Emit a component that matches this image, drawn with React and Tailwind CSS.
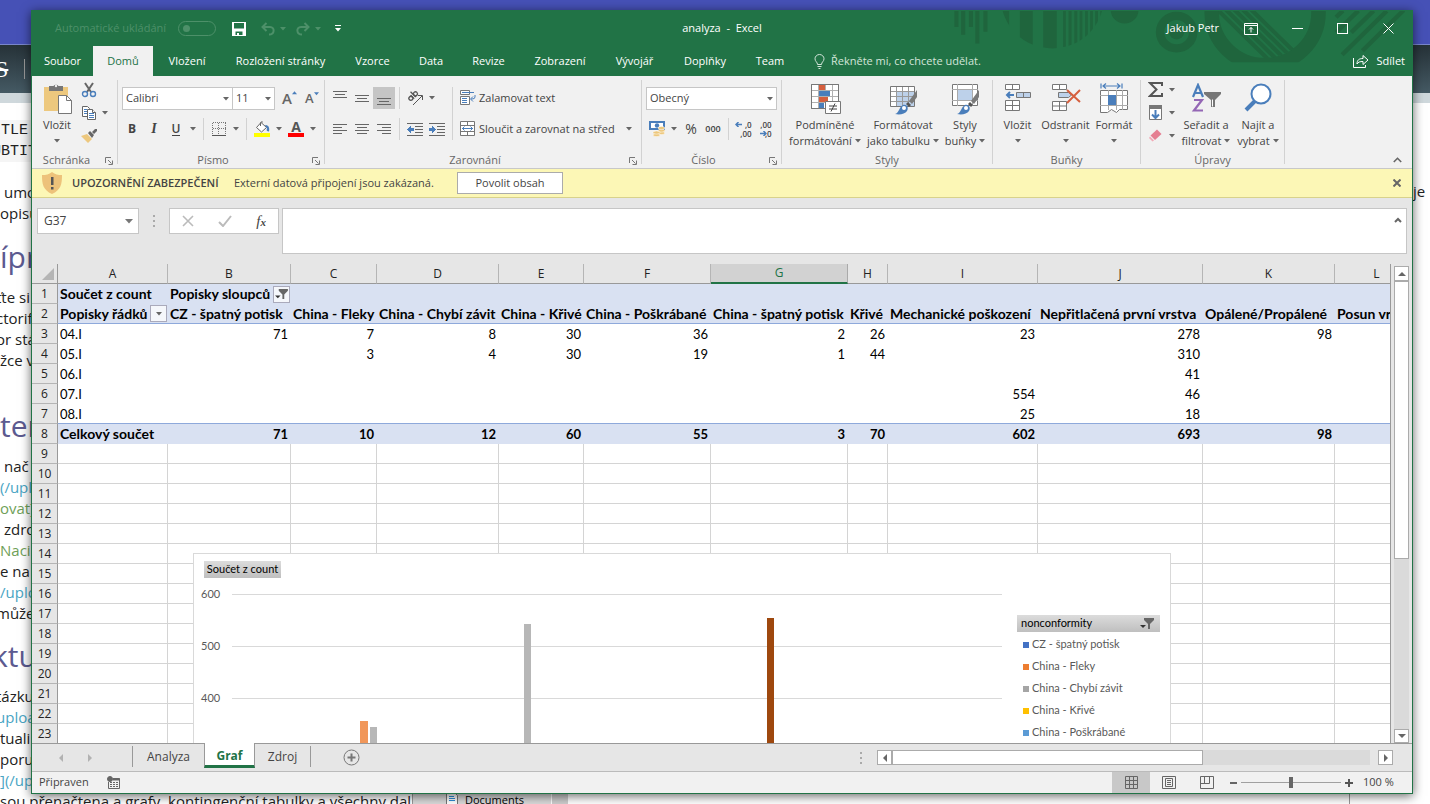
import { useState } from 'react';

const MENU = [
  { name: 'Soubor', width: 'w-[61px]' },
  { name: 'Domů', width: 'w-[60px]' },
  { name: 'Vložení', width: 'w-[68px]' },
  { name: 'Rozložení stránky', width: 'w-[119px]' },
  { name: 'Vzorce', width: 'w-[65px]' },
  { name: 'Data', width: 'w-[52px]' },
  { name: 'Revize', width: 'w-[63px]' },
  { name: 'Zobrazení', width: 'w-[80px]' },
  { name: 'Vývojář', width: 'w-[69px]' },
  { name: 'Doplňky', width: 'w-[72px]' },
  { name: 'Team', width: 'w-[58px]' },
];

const COLUMNS = [
  { id: 'A', width: 110 },
  { id: 'B', width: 123 },
  { id: 'C', width: 86 },
  { id: 'D', width: 122 },
  { id: 'E', width: 85 },
  { id: 'F', width: 127 },
  { id: 'G', width: 137 },
  { id: 'H', width: 40 },
  { id: 'I', width: 150 },
  { id: 'J', width: 165 },
  { id: 'K', width: 132 },
  { id: 'L', width: 84 },
];

const ROW_HEADER_WIDTH = 26;
const SHEET_WIDTH = COLUMNS.reduce((sum, col) => sum + col.width, ROW_HEADER_WIDTH);

const TITLES = [
  'Popisky řádků', 'CZ - špatný potisk', 'China - Fleky', 'China - Chybí závit', 'China - Křivé',
  'China - Poškrábané', 'China - špatný potisk', 'Křivé', 'Mechanické poškození',
  'Nepřitlačená první vrstva', 'Opálené/Propálené', 'Posun vrstev',
];

const DATA = [
  ['04.I', 71, 7, 8, 30, 36, 2, 26, 23, 278, 98, ''],
  ['05.I', '', 3, 4, 30, 19, 1, 44, '', 310, '', ''],
  ['06.I', '', '', '', '', '', '', '', '', 41, '', ''],
  ['07.I', '', '', '', '', '', '', '', 554, 46, '', ''],
  ['08.I', '', '', '', '', '', '', '', 25, 18, '', ''],
];

const TOTALS = ['Celkový součet', 71, 10, 12, 60, 55, 3, 70, 602, 693, 98, ''];

const EMPTY_ROWS = [9, 10, 11, 12, 13, 14, 15, 16, 17, 18, 19, 20, 21, 22, 23];

const LEGEND = [
  { name: 'CZ - špatný potisk', color: 'bg-[#4472c4]' },
  { name: 'China - Fleky', color: 'bg-[#ed7d31]' },
  { name: 'China - Chybí závit', color: 'bg-[#a5a5a5]' },
  { name: 'China - Křivé', color: 'bg-[#ffc000]' },
  { name: 'China - Poškrábané', color: 'bg-[#5b9bd5]' },
];

/* ---------- small shared pieces ---------- */

function Caret({ className = 'text-[#666]' }) {
  return (
    <svg viewBox="0 0 6 4" className={`h-1 w-1.5 shrink-0 ${className}`}>
      <path d="M0 0h6L3 3.5z" fill="currentColor" />
    </svg>
  );
}

function Tool({ label, active, children }) {
  return (
    <button
      aria-label={label}
      className={`flex h-[22px] w-[22px] shrink-0 items-center justify-center ${active ? 'bg-[#c5c5c5]' : ''}`}
    >
      {children}
    </button>
  );
}

function CaretButton({ label }) {
  return (
    <button aria-label={label} className="flex h-[22px] w-3 shrink-0 items-center justify-center">
      <Caret />
    </button>
  );
}

function Divider() {
  return <div className="mx-1 h-[22px] w-px shrink-0 bg-[#d2d2d2]" />;
}

function Group({ name, width, launcher = true, children }) {
  return (
    <section className={`flex shrink-0 flex-col ${width}`}>
      <div className="flex-1">{children}</div>
      <div className="mb-px flex h-[14px] items-center px-1 leading-[14px] text-[#666]">
        <span className={`flex-1 text-center ${launcher ? 'pr-2' : ''}`}>{name}</span>
        {launcher ? (
          <button aria-label={`${name} – další`} className="mt-[2px]">
            <svg viewBox="0 0 8 8" className="h-2 w-2" fill="none" stroke="#777">
              <path d="M.5 6V.5H6M3 3l3.5 3.5M7.5 3.5v4h-4" />
            </svg>
          </button>
        ) : null}
      </div>
    </section>
  );
}

function GroupLine() {
  return <div className="mt-1 mb-1 w-px shrink-0 bg-[#d2d2d2]" />;
}

function BigButton({ width, icon, lines, caretBelow }) {
  return (
    <button className={`flex flex-col items-center pt-[7px] leading-4 ${width}`}>
      <span className="mb-[2px] flex h-8 w-8 items-center justify-center">{icon}</span>
      <span>{lines[0]}</span>
      {caretBelow ? (
        <span className="flex h-4 items-center">
          <Caret />
        </span>
      ) : (
        <span className="flex items-center gap-[3px] whitespace-nowrap">
          {lines[1]} <Caret />
        </span>
      )}
    </button>
  );
}

function DropDown({ label, value, width }) {
  return (
    <div className={`relative ${width}`}>
      <select
        aria-label={label}
        defaultValue={value}
        className="h-[23px] w-full appearance-none rounded-none border border-[#c6c6c6] bg-white pl-[3px] text-[11px] text-[#444] outline-none"
      >
        <option>{value}</option>
      </select>
      <Caret className="pointer-events-none absolute top-[10px] right-1 text-[#666]" />
    </div>
  );
}

/* ---------- icons ---------- */

function Lines({ rows }) {
  return (
    <svg viewBox="0 0 14 14" className="h-[14px] w-[14px]" shapeRendering="crispEdges">
      {rows.map(([x, y, w]) => (
        <rect key={y} x={x} y={y} width={w} height="1" fill="#666" />
      ))}
    </svg>
  );
}

const alignTop = [[0, 0, 14], [2, 3, 10], [0, 6, 14]];
const alignMiddle = [[0, 4, 14], [2, 7, 10], [0, 10, 14]];
const alignBottom = [[0, 7, 14], [2, 10, 10], [0, 13, 14]];
const alignLeft = [[0, 2, 14], [0, 5, 9], [0, 8, 14], [0, 11, 9]];
const alignCenter = [[0, 2, 14], [2, 5, 10], [0, 8, 14], [2, 11, 10]];
const alignRight = [[0, 2, 14], [5, 5, 9], [0, 8, 14], [5, 11, 9]];

function PasteIcon() {
  return (
    <svg viewBox="0 0 30 32" className="h-8 w-[30px]">
      <path d="M2 4h24v24H2z" fill="#edc87e" />
      <path d="M7 8V3h4.500a3 3 0 0 1 5 0H21v5z" fill="#777" />
      <circle cx="14" cy="3" r="1.200" fill="#f0f0f0" />
      <path d="M16.500 12.500h8l5 5v13h-13z" fill="#fff" stroke="#777" />
      <path d="M24.500 12.500v5h5" fill="none" stroke="#777" />
    </svg>
  );
}

function CutIcon() {
  return (
    <svg viewBox="0 0 16 16" className="h-4 w-4" fill="none">
      <path d="M4 1l6 9M12 1L6 10" stroke="#666" strokeWidth="2" />
      <circle cx="4" cy="12" r="2.500" stroke="#4a7ebb" strokeWidth="1.400" />
      <circle cx="12" cy="12" r="2.500" stroke="#4a7ebb" strokeWidth="1.400" />
    </svg>
  );
}

function CopyIcon() {
  return (
    <svg viewBox="0 0 16 16" className="h-4 w-4" fill="#fff" stroke="#666">
      <path d="M1.500 1.500h5l2 2v8h-7z" />
      <path d="M3 4.500h3M3 6.500h3M3 8.500h3" stroke="#4a7ebb" />
      <path d="M6.500 4.500h5l3 3v7h-8z" />
      <path d="M11.500 4.500v3h3" />
      <path d="M8 8.500h5M8 10.500h5M8 12.500h5" stroke="#4a7ebb" />
    </svg>
  );
}

function PainterIcon() {
  return (
    <svg viewBox="0 0 16 16" className="h-4 w-4">
      <path d="M0 8l6-2 5 5-4 4z" fill="#edc87e" />
      <path d="M7 5l2-2 4 4-2 3zM11 4l3-3h2v2l-3 3z" fill="#666" />
    </svg>
  );
}

function FillIcon() {
  return (
    <svg viewBox="0 0 16 16" className="h-4 w-4">
      <path d="M7 1.500l5.500 5-5 4.500L2.500 6.500z" fill="#fff" stroke="#666" />
      <path d="M6.500 5V1.500A1.500 1.500 0 0 1 9 1.500" fill="none" stroke="#666" />
      <path d="M11 4c3 0 5 2 4 6.500-2 0-3-1-2-3z" fill="#4a7ebb" />
      <path d="M0 12h16v4H0z" fill="#ff0" />
    </svg>
  );
}

function BordersIcon() {
  return (
    <svg viewBox="0 0 14 14" className="h-[14px] w-[14px]" shapeRendering="crispEdges" fill="none" stroke="#777">
      <path d="M.5.5h13M.5 6.500h13M.5.5v13M6.500.5v13M13.500.5v13" strokeDasharray="1 1" />
      <path d="M0 13.500h14" stroke="#555" />
    </svg>
  );
}

function OrientationIcon() {
  return (
    <svg viewBox="0 0 16 16" className="h-4 w-4" fill="none" stroke="#555">
      <g transform="rotate(-45 6 7)" strokeWidth="1.300">
        <circle cx="3.500" cy="6.500" r="2" />
        <path d="M5.700 4v5M8 1.500V9" />
        <circle cx="10" cy="6.500" r="2" />
      </g>
      <path d="M6 15l9-9M11 5.500h4.500V10" />
    </svg>
  );
}

function IndentIcon({ right }) {
  return (
    <svg viewBox="0 0 16 14" className="h-[14px] w-4" shapeRendering="crispEdges">
      <path d="M0 1h16v1H0zM8 4h8v1H8zM8 7h8v1H8zM8 10h8v1H8zM0 13h16v1H0z" fill="#666" />
      <path d={right ? 'M0 6h3V4l4 3.500-4 3.500V9H0z' : 'M7 6H4V4L0 7.500 4 11V9h3z'} fill="#4a7ebb" />
    </svg>
  );
}

function WrapIcon() {
  return (
    <svg viewBox="0 0 16 16" className="h-4 w-4" fill="none" stroke="#777">
      <path d="M.5.5h9v4h-9zM.5 6.500h9v8h-9z" fill="#fff" />
      <path d="M2 2.500h12M2 8.500h5M2 10.500h5M2 12.500h5M15 5v2q0 2-3 2h-1M13 6.500L10.500 9l2.500 2.500" stroke="#4a7ebb" />
    </svg>
  );
}

function MergeIcon() {
  return (
    <svg viewBox="0 0 16 16" className="h-4 w-4" fill="#fff" stroke="#777">
      <path d="M.5.5h14v14H.5zM.5 4.500h14M.5 10.500h14M7.500.5v4M7.500 10.500v4" />
      <path d="M2 7.500h11M4.500 5.500l-2 2 2 2M10.500 5.500l2 2-2 2" fill="none" stroke="#4a7ebb" />
    </svg>
  );
}

function CurrencyIcon() {
  return (
    <svg viewBox="0 0 16 16" className="h-4 w-4">
      <path d="M0 0h16v9H0z" fill="#4a7ebb" />
      <path d="M2 2h12v5H2z" fill="#fff" />
      <circle cx="8" cy="4.500" r="2.200" fill="#4a7ebb" />
      <g fill="#edc87e" stroke="#fff" strokeWidth=".5">
        <ellipse cx="12.500" cy="12" rx="3.300" ry="1.600" />
        <ellipse cx="12.500" cy="9.500" rx="3.300" ry="1.600" />
        <ellipse cx="12.500" cy="7" rx="3.300" ry="1.600" />
        <ellipse cx="7.500" cy="14" rx="3.500" ry="1.600" />
        <ellipse cx="7.500" cy="11.500" rx="3.500" ry="1.600" />
      </g>
    </svg>
  );
}

function DecimalIcon({ more }) {
  return (
    <span className="relative flex flex-col items-end text-[8px] leading-[9px] font-semibold text-[#444]">
      <span>{more ? ',0' : ',00'}</span>
      <span className="pl-1">{more ? ',00' : ',0'}</span>
      <svg
        viewBox="0 0 7 5"
        className={`absolute h-[5px] w-[7px] ${more ? 'top-[2px] -left-px' : 'bottom-[2px] left-0'}`}
        fill="none"
        stroke="#4a7ebb"
        strokeWidth="1.500"
      >
        <path d={more ? 'M7 2.500H1M3.500 0L1 2.500 3.500 5' : 'M0 2.500h6M3.500 0L6 2.500 3.500 5'} />
      </svg>
    </span>
  );
}

function BrushShape() {
  return (
    <g>
      <path d="M30 7v7l-5 7-3-3z" fill="#7a7a7a" />
      <path d="M21 19l3 3-2 2-3-3z" fill="#555" />
      <path d="M8 31c4-1 4-7 8-9 4-1 6 3 4 6-2 3-7 4-12 3z" fill="#4a7ebb" />
      <circle cx="17" cy="25" r="2" fill="#fff" />
    </g>
  );
}

function ConditionalIcon() {
  return (
    <svg viewBox="0 0 32 32" className="h-8 w-8">
      <path d="M2.500 1.500h27v24h-27z" fill="#fff" stroke="#777" />
      <path d="M2 7.500h28M2 13.500h28M2 19.500h28M9.500 1v25M16.500 1v25M23.500 1v25" stroke="#b0b0b0" />
      <path d="M10 2h6v5h-6zM10 14h9v5h-9z" fill="#d65f3e" />
      <path d="M10 8h11v5H10zM10 20h5v6h-5z" fill="#4a7ebb" />
      <path d="M2.500 1.500h27v24h-27z" fill="none" stroke="#777" />
      <path d="M16.500 18.500h15v12h-15z" fill="#fff" stroke="#777" />
      <path d="M20 23h8M20 26h8M26 20.500l-4 8" stroke="#444" />
    </svg>
  );
}

function TableFormatIcon() {
  return (
    <svg viewBox="0 0 32 32" className="h-8 w-8">
      <path d="M3.500 3.500h24v20h-24z" fill="#fff" />
      <path d="M10 9h17v14H10z" fill="#bdd1ea" />
      <path d="M3 8.500h25M3 13.500h25M3 18.500h25M9.500 3v20M15.500 3v20M21.500 3v20" stroke="#999" />
      <path d="M3.500 3.500h24v20h-24z" fill="none" stroke="#777" />
      <BrushShape />
    </svg>
  );
}

function CellStylesIcon() {
  return (
    <svg viewBox="0 0 32 32" className="h-8 w-8">
      <path d="M3.500 1.500h25v21h-25z" fill="#fff" stroke="#777" />
      <path d="M3 6.500h26M3 17.500h26M8.500 1v22M23.500 1v22" stroke="#aaa" />
      <path d="M9 7h14v10H9z" fill="#bdd1ea" />
      <BrushShape />
    </svg>
  );
}

function InsertCellsIcon() {
  return (
    <svg viewBox="0 0 32 32" className="h-8 w-8" fill="#fff" stroke="#777">
      <path d="M3.500 1.500h14v5h-14zM10.500 1.500v5M3.500 17.500h14v10h-14zM3.500 22.500h14M10.500 17.500v10" />
      <path d="M14.500 9.500h14v5h-14zM21.500 9.500v5" fill="#bdd1ea" />
      <path d="M12 12H5M8 9l-3 3 3 3" fill="none" stroke="#4a7ebb" strokeWidth="2" />
    </svg>
  );
}

function DeleteCellsIcon() {
  return (
    <svg viewBox="0 0 32 32" className="h-8 w-8" fill="#fff" stroke="#777">
      <path d="M2.500 1.500h14v5h-14zM9.500 1.500v5M2.500 18.500h14v9h-14zM2.500 23h14M9.500 18.500v9" />
      <path d="M8.500 9.500h10l3 2.500-3 2.500h-10z" fill="#bdd1ea" />
      <path d="M17 7l13 12M30 7L17 20" fill="none" stroke="#d65f3e" strokeWidth="2" />
    </svg>
  );
}

function FormatCellsIcon() {
  return (
    <svg viewBox="0 0 32 32" className="h-8 w-8">
      <path d="M3 .5v5M24 .5v5M5 3h17M8 .5L5 3l3 2.500M19 .5L22 3l-3 2.500" fill="none" stroke="#4a7ebb" strokeWidth="1.200" />
      <path d="M2.500 7.500h27v19h-8l-3 3-5-3-4 3h-7z" fill="#fff" stroke="#777" />
      <path d="M2 12.500h28M2 22.500h28M10.500 7v20M18.500 7v20M24.500 7v20" stroke="#aaa" />
      <path d="M10 12h8v10h-8z" fill="#4a7ebb" />
    </svg>
  );
}

function SortIcon() {
  return (
    <svg viewBox="0 0 32 32" className="h-8 w-8">
      <path d="M3 14L8 2l5 12M5 10h6" fill="none" stroke="#4a7ebb" strokeWidth="2.200" />
      <path d="M4 17h8L4 27.500h9" fill="none" stroke="#9467b5" strokeWidth="2.200" />
      <path d="M14 9h17v2l-6 6v7h-4v-7l-7-6z" fill="#777" />
      <path d="M22.500 16.500v7" stroke="#fff" />
    </svg>
  );
}

function FindIcon() {
  return (
    <svg viewBox="0 0 32 32" className="h-8 w-8">
      <path d="M13 18l-9 9" stroke="#4a7ebb" strokeWidth="4" />
      <circle cx="19" cy="11" r="9.500" fill="#fff" stroke="#4a7ebb" strokeWidth="2" />
    </svg>
  );
}

function FunnelIcon({ className }) {
  return (
    <svg viewBox="0 0 14 12" className={className}>
      <path d="M4 0h10v2l-4 4v5H8V6L4 2z" fill="#666" />
      <path d="M0 7h6L3 10z" fill="#333" />
    </svg>
  );
}

/* ---------- title bar ---------- */

function TitlePattern() {
  return (
    <svg
      viewBox="150 33 1350 160"
      preserveAspectRatio="none"
      className="pointer-events-none absolute top-0 right-[5px] h-[53px] w-[456px]"
      fill="#1f653d"
    >
      <defs>
        <clipPath id="disc"><circle cx="450" cy="-6" r="152" /></clipPath>
        <clipPath id="bowl"><circle cx="1080" cy="38" r="137" /></clipPath>
        <clipPath id="bowlEdge"><path d="M850 33h500v155H850z" /></clipPath>
      </defs>
      <path d="M160 33h12v48h-12zM180 33h12v72h-12zM203 33h12v48h-12zM222 33h12v98h-12zM246 33h12v63h-12z" />
      <path
        clipPath="url(#disc)"
        d="M280 33h42v130h-42zM354 33h38v130h-38zM423 33h40v130h-40zM482 33h8v130h-8zM498 33h9v130h-9zM515 33h9v130h-9zM531 33h8v130h-8zM547 33h8v130h-8zM562 33h8v130h-8zM577 33h8v130h-8zM592 33h8v130h-8z"
      />
      <circle cx="664" cy="30" r="41" />
      <circle cx="818" cy="97" r="49" fill="none" stroke="#1f653d" strokeWidth="25" />
      <circle cx="818" cy="97" r="22" />
      <g clipPath="url(#bowlEdge)">
        <circle cx="1080" cy="38" r="158" fill="none" stroke="#1f653d" strokeWidth="43" />
      </g>
      <g clipPath="url(#bowl)" stroke="#1f653d" strokeWidth="12">
        <path d="M930 20l170 170M955 20l170 170M980 20l170 170M1005 20l170 170M1030 20l170 170" />
      </g>
      <g stroke="#1f653d" strokeWidth="13">
        <path d="M1290 52l20-20M1290 98l66-66M1335 98l66-66M1308 165l132-132M1368 153l122-122" />
      </g>
    </svg>
  );
}

function TitleBar() {
  return (
    <div className="relative flex h-[35px] items-center justify-between text-[11px] text-white">
      <div className="flex items-center pl-[23px] text-[#4d9069]">
        <label htmlFor="autosave" className="w-[123px]">Automatické ukládání</label>
        <input
          id="autosave"
          type="checkbox"
          className="flex h-[15px] w-[38px] appearance-none items-center rounded-full border border-[#4d9069] pl-1 before:block before:h-[7px] before:w-[7px] before:rounded-full before:bg-[#4d9069]"
        />
        <button aria-label="Uložit" className="ml-4">
          <svg viewBox="0 0 14 14" className="h-[14px] w-[14px]">
            <path fillRule="evenodd" d="M0 0h14v14H0zM2 1v5.500h10V1zM3.500 9.500V13H5v-2h2v2h3.500V9.500z" fill="#fff" />
          </svg>
        </button>
        <button aria-label="Zpět" className="ml-[15px]">
          <svg viewBox="0 0 14 14" className="h-[14px] w-[14px]" fill="none" stroke="#4d9069" strokeWidth="2">
            <path d="M5.500 1L1.500 5l4 4M2 5h7c5 0 5 7.500-1 7.500" />
          </svg>
        </button>
        <Caret className="ml-[5px] text-[#4d9069]" />
        <button aria-label="Znovu" className="ml-[10px]">
          <svg viewBox="0 0 14 14" className="h-[14px] w-[14px]" fill="none" stroke="#4d9069" strokeWidth="2">
            <path d="M8.500 1l4 4-4 4M12 5H5C0 5 0 12.500 6 12.500" />
          </svg>
        </button>
        <Caret className="ml-[5px] text-[#4d9069]" />
        <button aria-label="Přizpůsobit panel" className="ml-[14px] flex flex-col items-center gap-[2px]">
          <span className="h-px w-1.5 bg-white" />
          <Caret className="text-white" />
        </button>
      </div>
      <h1 className="absolute inset-x-40 text-center whitespace-pre">analyza  -  Excel</h1>
      <div className="relative flex items-center">
        <span className="mr-[25px]">Jakub Petr</span>
        <button aria-label="Možnosti pásu karet" className="mr-[34px]">
          <svg viewBox="0 0 14 12" className="h-3 w-[14px]" fill="none" stroke="#fff">
            <path d="M.5.5h13v11H.5zM.5 2.500h13M7 9.500v-5M5 6.500l2-2 2 2" />
          </svg>
        </button>
        <button aria-label="Minimalizovat" className="mr-[34px] flex h-3 w-[11px] items-center">
          <span className="block h-px w-full bg-white" />
        </button>
        <button aria-label="Maximalizovat" className="mr-[35px] h-[11px] w-[11px] border border-white" />
        <button aria-label="Zavřít" className="mr-[18px]">
          <svg viewBox="0 0 11 11" className="h-[11px] w-[11px]" fill="none" stroke="#fff">
            <path d="M.5.5l10 10M10.500.5l-10 10" />
          </svg>
        </button>
      </div>
    </div>
  );
}

function MenuBar({ active, onSelect }) {
  return (
    <nav className="relative flex h-[30px] text-white">
      {MENU.map((item) => (
        <button
          key={item.name}
          onClick={() => onSelect(item.name)}
          className={`whitespace-nowrap ${item.width} ${active === item.name ? 'bg-[#f1f1f1] text-[#217346]' : ''}`}
        >
          {item.name}
        </button>
      ))}
      <button className="flex items-center gap-[6px] pl-[15px] text-[#d3e5da]">
        <svg viewBox="0 0 11 15" className="h-[15px] w-[11px]" fill="none" stroke="#d3e5da">
          <path d="M3.500 10.500C3.500 8 1 7.500 1 4.800a4.500 4.300 0 0 1 9 0C10 7.500 7.500 8 7.500 10.500zM3.500 12.500h4M4.500 14.500h2" />
        </svg>
        Řekněte mi, co chcete udělat.
      </button>
      <button className="mr-[7px] ml-auto flex items-center gap-2">
        <svg viewBox="0 0 16 14" className="h-[14px] w-4" fill="none" stroke="#fff">
          <path d="M.5 4v9.500h12V11M4 10c0-4 2-5.500 6-5.500V1.500L15 6l-5 4.500V7.500c-3 0-5 .5-6 2.500z" />
        </svg>
        Sdílet
      </button>
    </nav>
  );
}

/* ---------- ribbon ---------- */

function Ribbon() {
  return (
    <div className="flex h-[93px] shrink-0 border-b border-[#c8c8c8] bg-[#f1f1f1] text-[#444]">
      <Group name="Schránka" width="w-[85px]">
        <div className="flex pl-1">
          <BigButton width="w-[42px]" icon={<PasteIcon />} lines={['Vložit']} caretBelow />
          <div className="flex flex-col gap-[7px] pt-[6px] pl-[3px]">
            <button aria-label="Vyjmout" className="w-4"><CutIcon /></button>
            <div className="flex items-center">
              <button aria-label="Kopírovat" className="w-4"><CopyIcon /></button>
              <button aria-label="Možnosti kopírování" className="pl-[5px]"><Caret /></button>
            </div>
            <button aria-label="Kopírovat formát" className="w-4"><PainterIcon /></button>
          </div>
        </div>
      </Group>
      <GroupLine />
      <Group name="Písmo" width="w-[206px]">
        <div className="flex flex-col gap-2 pt-[11px] pl-1">
          <div className="flex h-[23px] items-center">
            <DropDown label="Písmo" value="Calibri" width="w-[111px]" />
            <DropDown label="Velikost písma" value="11" width="-ml-px w-[43px]" />
            <button aria-label="Zvětšit písmo" className="ml-[7px] flex text-[15px] leading-none font-semibold text-[#666]">
              A<svg viewBox="0 0 6 4" className="h-1 w-[5px]"><path d="M0 3.500h6L3 0z" fill="#4a7ebb" /></svg>
            </button>
            <button aria-label="Zmenšit písmo" className="ml-2 flex text-[13px] leading-none font-semibold text-[#666]">
              A<svg viewBox="0 0 6 4" className="h-1 w-[5px]"><path d="M0 0h6L3 3.500z" fill="#4a7ebb" /></svg>
            </button>
          </div>
          <div className="-ml-px flex items-center">
            <Tool label="Tučné"><b className="text-xs">B</b></Tool>
            <Tool label="Kurzíva"><i className="font-['Liberation_Serif',serif] text-sm font-bold">I</i></Tool>
            <Tool label="Podtržené"><span className="border-b border-[#444] text-xs leading-3 font-semibold">U</span></Tool>
            <CaretButton label="Možnosti podtržení" />
            <Divider />
            <Tool label="Ohraničení"><BordersIcon /></Tool>
            <CaretButton label="Možnosti ohraničení" />
            <Divider />
            <Tool label="Barva výplně"><FillIcon /></Tool>
            <CaretButton label="Možnosti výplně" />
            <Tool label="Barva písma">
              <span className="w-4 border-b-4 border-[#f00] text-center text-sm leading-3 font-bold text-[#555]">A</span>
            </Tool>
            <CaretButton label="Možnosti barvy písma" />
          </div>
        </div>
      </Group>
      <GroupLine />
      <Group name="Zarovnání" width="w-[316px]">
        <div className="flex pt-[11px] pl-1">
          <div className="flex w-[120px] flex-col gap-[9px]">
            <div className="flex">
              <Tool label="Zarovnat nahoru"><Lines rows={alignTop} /></Tool>
              <Tool label="Zarovnat na střed svisle"><Lines rows={alignMiddle} /></Tool>
              <Tool label="Zarovnat dolů" active><Lines rows={alignBottom} /></Tool>
              <Divider />
              <Tool label="Orientace"><OrientationIcon /></Tool>
              <CaretButton label="Možnosti orientace" />
            </div>
            <div className="flex">
              <Tool label="Zarovnat vlevo"><Lines rows={alignLeft} /></Tool>
              <Tool label="Zarovnat na střed"><Lines rows={alignCenter} /></Tool>
              <Tool label="Zarovnat vpravo"><Lines rows={alignRight} /></Tool>
              <Divider />
              <Tool label="Zmenšit odsazení"><IndentIcon /></Tool>
              <Tool label="Zvětšit odsazení"><IndentIcon right /></Tool>
            </div>
          </div>
          <div className="mx-[3px] w-px bg-[#d2d2d2]" />
          <div className="flex flex-col gap-[9px] pl-1">
            <button className="flex h-[22px] items-center gap-[3px]"><WrapIcon /> Zalamovat text</button>
            <div className="flex items-center">
              <button className="flex h-[22px] w-[163px] items-center gap-[3px] whitespace-nowrap">
                <MergeIcon /> Sloučit a zarovnat na střed
              </button>
              <CaretButton label="Možnosti sloučení" />
            </div>
          </div>
        </div>
      </Group>
      <GroupLine />
      <Group name="Číslo" width="w-[139px]">
        <div className="flex flex-col gap-2 pt-[11px] pl-1">
          <DropDown label="Formát čísla" value="Obecný" width="w-[131px]" />
          <div className="flex items-center">
            <Tool label="Účetnický formát"><CurrencyIcon /></Tool>
            <CaretButton label="Možnosti měny" />
            <Tool label="Procenta"><span className="text-sm">%</span></Tool>
            <Tool label="Oddělovač tisíců"><span className="text-[9px] font-semibold">000</span></Tool>
            <Divider />
            <Tool label="Přidat desetinné místo"><DecimalIcon more /></Tool>
            <Tool label="Odebrat desetinné místo"><DecimalIcon /></Tool>
          </div>
        </div>
      </Group>
      <GroupLine />
      <Group name="Styly" width="w-[210px]" launcher={false}>
        <div className="flex pl-1">
          <BigButton width="w-[78px]" icon={<ConditionalIcon />} lines={['Podmíněné', 'formátování']} />
          <BigButton width="w-[78px]" icon={<TableFormatIcon />} lines={['Formátovat', 'jako tabulku']} />
          <BigButton width="w-[46px]" icon={<CellStylesIcon />} lines={['Styly', 'buňky']} />
        </div>
      </Group>
      <GroupLine />
      <Group name="Buňky" width="w-[147px]" launcher={false}>
        <div className="flex pl-[3px]">
          <BigButton width="w-[43px]" icon={<InsertCellsIcon />} lines={['Vložit']} caretBelow />
          <BigButton width="w-[53px]" icon={<DeleteCellsIcon />} lines={['Odstranit']} caretBelow />
          <BigButton width="w-[44px]" icon={<FormatCellsIcon />} lines={['Formát']} caretBelow />
        </div>
      </Group>
      <GroupLine />
      <Group name="Úpravy" width="w-[143px]" launcher={false}>
        <div className="flex pl-[7px]">
          <div className="flex flex-col gap-2 pt-[6px]">
            <button aria-label="Automatické shrnutí" className="flex items-center gap-[5px]">
              <svg viewBox="0 0 16 15" className="h-[15px] w-4" fill="none" stroke="#555" strokeWidth="2">
                <path d="M14 4V1H2l6.500 6.500L2 14h12v-3" />
              </svg>
              <Caret />
            </button>
            <button aria-label="Výplň" className="flex items-center gap-[5px]">
              <svg viewBox="0 0 16 15" className="h-[15px] w-4" fill="none">
                <path d="M1.500.5h12v14h-12z" fill="#fff" stroke="#777" />
                <path d="M1 0h13v4H1z" fill="#777" />
                <path d="M7.500 5v8M4 9.500l3.500 3.500L11 9.500" stroke="#4a7ebb" strokeWidth="2" />
              </svg>
              <Caret />
            </button>
            <button aria-label="Vymazat" className="flex items-center gap-[5px]">
              <svg viewBox="0 0 16 15" className="h-[15px] w-4">
                <path d="M9 1.500l4.500 4.500L7 12 2.500 7.500z" fill="#e57f92" />
                <path d="M2 8.500l4 4-1.500 1L1 10z" fill="#f2a9b6" />
              </svg>
              <Caret />
            </button>
          </div>
          <BigButton width="ml-1 w-[54px]" icon={<SortIcon />} lines={['Seřadit a', 'filtrovat']} />
          <BigButton width="w-[50px]" icon={<FindIcon />} lines={['Najít a', 'vybrat']} />
        </div>
      </Group>
      <GroupLine />
      <button aria-label="Sbalit pás karet" className="mt-auto mr-[10px] mb-[5px] ml-auto">
        <svg viewBox="0 0 9 6" className="h-[6px] w-[9px]" fill="none" stroke="#666" strokeWidth="1.600">
          <path d="M.8 5L4.500 1.300 8.200 5" />
        </svg>
      </button>
    </div>
  );
}

function SecurityBar() {
  return (
    <div className="flex h-[29px] shrink-0 items-center border-b border-[#d8d28c] bg-[#fcf7b6] pr-[11px] pl-[10px] text-[#444]">
      <svg viewBox="0 0 20 22" className="h-[22px] w-5 shrink-0">
        <path d="M10 0c3 2.500 6 3 10 3 0 9-1 15-10 19C1 18 0 12 0 3c4 0 7-.5 10-3z" fill="#edc27a" />
        <path d="M9 5h2.500v8H9zM9 15h2.500v2.500H9z" fill="#555" />
      </svg>
      <strong className="w-[172px] shrink-0 pl-[10px] font-semibold whitespace-nowrap">UPOZORNĚNÍ ZABEZPEČENÍ</strong>
      <span className="w-[223px] whitespace-nowrap">Externí datová připojení jsou zakázaná.</span>
      <button className="h-[22px] w-[106px] shrink-0 border border-[#ababab] bg-white">Povolit obsah</button>
      <button aria-label="Zavřít upozornění" className="ml-auto">
        <svg viewBox="0 0 8 8" className="h-2 w-2" fill="none" stroke="#666" strokeWidth="2">
          <path d="M.5.5l7 7M7.500.5l-7 7" />
        </svg>
      </button>
    </div>
  );
}

function Dots() {
  return (
    <span className="flex flex-col gap-[3px]">
      <span className="h-[2px] w-[2px] bg-[#aaa]" />
      <span className="h-[2px] w-[2px] bg-[#aaa]" />
      <span className="h-[2px] w-[2px] bg-[#aaa]" />
    </span>
  );
}

function FormulaBar() {
  return (
    <div className="flex h-[66px] shrink-0 items-start pt-[10px] pr-[5px] pl-[5px] text-[#444]">
      <div className="flex h-[26px] w-[102px] items-center border border-[#c6c6c6] bg-white pr-[5px]">
        <input aria-label="Pole názvů" defaultValue="G37" className="w-full min-w-0 pl-[6px] text-xs outline-none" />
        <svg viewBox="0 0 8 5" className="h-[5px] w-2 shrink-0"><path d="M0 0h8L4 4.500z" fill="#777" /></svg>
      </div>
      <div className="flex h-[26px] w-[30px] items-center justify-center"><Dots /></div>
      <div className="flex h-[26px] w-[110px] items-center justify-around border border-[#c6c6c6] bg-white">
        <button aria-label="Zrušit">
          <svg viewBox="0 0 12 12" className="h-3 w-3" stroke="#bbb" strokeWidth="1.600"><path d="M1 1l10 10M11 1L1 11" /></svg>
        </button>
        <button aria-label="Zadat">
          <svg viewBox="0 0 14 12" className="h-3 w-[14px]" fill="none" stroke="#bbb" strokeWidth="2"><path d="M1 7l4 4L13 1" /></svg>
        </button>
        <button aria-label="Vložit funkci" className="font-['Liberation_Serif',serif] text-[15px] text-[#444] italic">
          f<span className="text-[11px] font-bold">x</span>
        </button>
      </div>
      <div className="ml-[3px] flex h-[46px] flex-1 border border-[#c6c6c6] bg-white">
        <textarea aria-label="Řádek vzorců" className="flex-1 resize-none outline-none" />
        <button aria-label="Sbalit řádek vzorců" className="mt-2 mr-1 self-start">
          <svg viewBox="0 0 8 6" className="h-[6px] w-2" fill="none" stroke="#666" strokeWidth="2"><path d="M1 5l3-3 3 3" /></svg>
        </button>
      </div>
    </div>
  );
}

/* ---------- sheet ---------- */

function RowHeader({ n }) {
  return (
    <th className="border-r border-b border-r-[#999] border-b-[#b5b5b5] bg-[#e6e6e6] p-0 pt-px text-center font-['Open_Sans',sans-serif] text-xs leading-[18px] font-normal text-[#222]">
      {n}
    </th>
  );
}

function Sheet() {
  return (
    <table
      className="table-fixed border-separate border-spacing-0 font-['Lato','Open_Sans',sans-serif] text-[13px] leading-[18px] whitespace-nowrap text-black"
      style={{ width: SHEET_WIDTH }}
    >
      <colgroup>
        <col style={{ width: ROW_HEADER_WIDTH }} />
        {COLUMNS.map((col) => (
          <col key={col.id} style={{ width: col.width }} />
        ))}
      </colgroup>
      <thead>
        <tr className="h-5 font-['Open_Sans',sans-serif] text-xs">
          <th className="h-5 border-r border-b border-r-[#999] border-b-[#999] bg-[#e6e6e6] p-0 align-bottom">
            <svg viewBox="0 0 12 12" className="mb-[3px] ml-[10px] h-3 w-3"><path d="M12 0v12H0z" fill="#b5b5b5" /></svg>
          </th>
          {COLUMNS.map((col) => (
            <th
              key={col.id}
              className={`h-5 border-r p-0 font-normal ${
                col.id === 'G'
                  ? 'border-b-2 border-r-[#aaa] border-b-[#217346] bg-[#d2d2d2] text-[#217346]'
                  : 'border-b border-r-[#b5b5b5] border-b-[#999] bg-[#e6e6e6] text-[#222]'
              }`}
            >
              {col.id}
            </th>
          ))}
        </tr>
      </thead>
      <tbody>
        <tr className="h-5 bg-[#d9e1f2] text-sm leading-[18px] font-bold">
          <RowHeader n={1} />
          <td className="p-0 pl-[2px]">Součet z count</td>
          <td className="p-0 pl-[2px]">
            <div className="flex h-[18px] items-center justify-between">
              Popisky sloupců
              <button aria-label="Filtr sloupců" className="mr-px flex h-[17px] w-[17px] shrink-0 items-center justify-center border border-[#aab] bg-[#f5f7fb]">
                <FunnelIcon className="h-[11px] w-[13px]" />
              </button>
            </div>
          </td>
          <td colSpan={10} className="p-0" />
        </tr>
        <tr className="h-5 bg-[#d9e1f2] text-sm leading-[18px] font-bold">
          <RowHeader n={2} />
          {TITLES.map((title, i) => (
            <td key={title} className="border-b border-[#8ea9db] p-0 pl-[2px]">
              {i === 0 ? (
                <div className="flex h-[18px] items-center justify-between">
                  {title}
                  <button aria-label="Filtr řádků" className="mr-px flex h-[17px] w-[17px] shrink-0 items-center justify-center border border-[#aab] bg-[#f5f7fb]">
                    <Caret />
                  </button>
                </div>
              ) : title}
            </td>
          ))}
        </tr>
        {DATA.map((row, r) => (
          <tr key={row[0]} className="h-5 bg-white">
            <RowHeader n={r + 3} />
            {row.map((cell, i) => (
              <td
                key={COLUMNS[i].id}
                className={`p-0 ${i === 0 ? 'pl-[2px]' : 'pr-[3px] text-right'} ${r === 4 ? 'border-b border-[#8ea9db]' : ''}`}
              >
                {cell}
              </td>
            ))}
          </tr>
        ))}
        <tr className="h-5 bg-[#d9e1f2] font-bold">
          <RowHeader n={8} />
          {TOTALS.map((cell, i) => (
            <td key={COLUMNS[i].id} className={`p-0 ${i === 0 ? 'pl-[2px] text-sm leading-[18px]' : 'pr-[3px] text-right'}`}>
              {cell}
            </td>
          ))}
        </tr>
        {EMPTY_ROWS.map((n) => (
          <tr key={n} className="h-5 bg-white">
            <RowHeader n={n} />
            {COLUMNS.map((col) => (
              <td key={col.id} className="border-r border-b border-[#d4d4d4] p-0" />
            ))}
          </tr>
        ))}
      </tbody>
    </table>
  );
}

function Chart() {
  return (
    <div className="absolute top-[289px] left-[161px] flex h-[320px] w-[978px] items-start border border-[#d9d9d9] bg-white font-['Lato','Open_Sans',sans-serif] text-[11px] text-[#595959]">
      <div className="w-[812px]">
        <button className="mt-[7px] ml-[10px] block h-[17px] w-[77px] bg-linear-to-b from-[#dcdcdc] to-[#bfbfbf] text-black">
          Součet z count
        </button>
        <div className="mt-[6px] flex">
          <div className="w-[38px] pl-[7px] leading-[20px]">
            <div className="mb-8">600</div>
            <div className="mb-8">500</div>
            <div>400</div>
          </div>
          <svg viewBox="0 0 770 250" className="mt-[10px] h-[250px] w-[770px]" shapeRendering="crispEdges">
            <path d="M0 0h770v1H0zM0 52h770v1H0zM0 104h770v1H0zM0 156h770v1H0z" fill="#d9d9d9" />
            <rect x="128" y="127" width="8" height="123" fill="#f1975a" />
            <rect x="138" y="133" width="7" height="117" fill="#b7b7b7" />
            <rect x="292" y="30" width="7" height="220" fill="#b7b7b7" />
            <rect x="535" y="24" width="7" height="226" fill="#9e480e" />
          </svg>
        </div>
      </div>
      <div className="mt-[61px] ml-[11px] w-[143px]">
        <button className="mb-px flex h-[17px] w-full items-center justify-between bg-linear-to-b from-[#dcdcdc] to-[#bfbfbf] px-1 text-black">
          nonconformity
          <FunnelIcon className="h-3 w-[18px]" />
        </button>
        <ul>
          {LEGEND.map((item) => (
            <li key={item.name} className="flex h-[22px] items-center gap-[3px] pl-[6px]">
              <span className={`mt-[2px] h-[6px] w-[6px] ${item.color}`} />
              {item.name}
            </li>
          ))}
        </ul>
      </div>
    </div>
  );
}

function Arrow({ d }) {
  return (
    <svg viewBox="0 0 8 8" className="h-2 w-2"><path d={d} fill="#666" /></svg>
  );
}

function VerticalScroll() {
  return (
    <div className="mt-[2px] mr-[3px] ml-[3px] flex w-[15px] shrink-0 flex-col">
      <button aria-label="Posunout nahoru" className="flex h-[15px] items-center justify-center border border-[#ababab] bg-white">
        <Arrow d="M0 6h8L4 2z" />
      </button>
      <div className="flex-1 bg-[#dadada]">
        <div className="h-[62%] border border-[#ababab] bg-white" />
      </div>
      <button aria-label="Posunout dolů" className="flex h-[14px] items-center justify-center border border-[#ababab] bg-white">
        <Arrow d="M0 2h8L4 6z" />
      </button>
    </div>
  );
}

function SheetTabs() {
  return (
    <div className="flex h-7 shrink-0 border-t border-[#999] text-xs text-[#444]">
      <div className="flex w-[100px] items-center gap-[21px] pl-[25px] opacity-40">
        <button aria-label="Předchozí list"><Arrow d="M6 0v8L2 4z" /></button>
        <button aria-label="Další list"><Arrow d="M2 0v8l4-4z" /></button>
      </div>
      <button className="mt-[2px] mb-1 w-[72px] border-l border-[#999]">Analyza</button>
      <button className="-mt-px mb-[3px] w-[51px] border-x border-b-3 border-x-[#999] border-b-[#217346] bg-white pt-1 font-bold text-[#217346]">Graf</button>
      <button className="mt-[2px] mb-1 w-[56px] border-r border-[#999]">Zdroj</button>
      <button aria-label="Nový list" className="ml-8">
        <svg viewBox="0 0 17 17" className="h-[17px] w-[17px]" fill="none" stroke="#777">
          <circle cx="8.500" cy="8.500" r="7.500" />
          <path d="M8.500 4.500v8M4.500 8.500h8" strokeWidth="2" />
        </svg>
      </button>
      <div className="mr-[19px] ml-auto flex w-[533px] items-center">
        <Dots />
        <div className="ml-[15px] flex h-[15px] flex-1">
          <button aria-label="Posunout vlevo" className="flex w-[15px] items-center justify-center border border-[#ababab] bg-white">
            <Arrow d="M6 0v8L2 4z" />
          </button>
          <div className="mr-2 flex-1 bg-[#dadada]">
            <div className="h-full w-[65%] border border-[#ababab] bg-white" />
          </div>
          <button aria-label="Posunout vpravo" className="flex w-[15px] items-center justify-center border border-[#ababab] bg-white">
            <Arrow d="M2 0v8l4-4z" />
          </button>
        </div>
      </div>
    </div>
  );
}

function StatusBar() {
  const [zoom, setZoom] = useState(50);

  return (
    <div className="flex h-[22px] shrink-0 items-center border-t border-[#bbb] bg-[#f1f1f1] pl-[7px] text-[#444]">
      <span className="w-[68px]">Připraven</span>
      <button aria-label="Záznam makra">
        <svg viewBox="0 0 13 13" className="h-[13px] w-[13px]" fill="none" stroke="#666">
          <path d="M1.500 6v6.500h11v-10H6" />
          <path d="M6 3.500h7" strokeWidth="2" />
          <path d="M3 6.500h8M3 8.500h8M3 10.500h8" strokeDasharray="2 1" />
          <circle cx="3" cy="3" r="2.500" fill="#666" />
        </svg>
      </button>
      <div className="ml-auto flex h-full items-center">
        <button aria-label="Normálně" className="flex h-full w-[38px] items-center justify-center bg-[#c8c8c8]">
          <svg viewBox="0 0 13 13" className="h-[13px] w-[13px]" fill="none" stroke="#666">
            <path d="M.5.5h12v12H.5zM.5 4.500h12M.5 8.500h12M4.500.5v12M8.500.5v12" />
          </svg>
        </button>
        <button aria-label="Rozložení stránky" className="flex h-full w-[38px] items-center justify-center">
          <svg viewBox="0 0 14 13" className="h-[13px] w-[14px]" fill="none" stroke="#666">
            <path d="M.5.5h13v12H.5zM3.500 2.500h7v8h-7zM5 4.500h4M5 6.500h4M5 8.500h4" />
          </svg>
        </button>
        <button aria-label="Konce stránek" className="flex h-full w-[38px] items-center justify-center">
          <svg viewBox="0 0 14 13" className="h-[13px] w-[14px]" fill="none" stroke="#666">
            <path d="M.5.5h13v12H.5zM4.500.5v7M9.500.5v7M.5 7.500h9" />
          </svg>
        </button>
        <button aria-label="Zmenšit" className="ml-1 h-[2px] w-[7px] bg-[#666]" />
        <input
          type="range"
          aria-label="Lupa"
          value={zoom}
          onChange={(e) => setZoom(e.target.value)}
          className="mx-1 h-3 w-[100px] appearance-none bg-transparent [&::-webkit-slider-runnable-track]:h-px [&::-webkit-slider-runnable-track]:bg-[#a0a0a0] [&::-webkit-slider-thumb]:-mt-[5px] [&::-webkit-slider-thumb]:h-[11px] [&::-webkit-slider-thumb]:w-1 [&::-webkit-slider-thumb]:appearance-none [&::-webkit-slider-thumb]:bg-[#666]"
        />
        <button aria-label="Zvětšit">
          <svg viewBox="0 0 8 8" className="h-2 w-2" stroke="#555" strokeWidth="2"><path d="M4 0v8M0 4h8" /></svg>
        </button>
        <span className="w-[59px] pl-[10px]">100 %</span>
      </div>
    </div>
  );
}

function ExcelWindow() {
  const [active, setActive] = useState('Domů');

  return (
    <main className="absolute inset-x-[17px] top-[10px] bottom-[10px] ml-[14px] flex flex-col border border-[#217346] bg-[#e6e6e6] text-[11px] shadow-[0_2px_10px_rgba(0,0,0,0.6)]">
      <header className="relative shrink-0 bg-[#217346]">
        <TitlePattern />
        <TitleBar />
        <MenuBar active={active} onSelect={setActive} />
      </header>
      <Ribbon />
      <SecurityBar />
      <FormulaBar />
      <div className="flex min-h-0 flex-1">
        <div className="relative min-w-0 flex-1 overflow-hidden border-r border-[#999]">
          <Sheet />
          <Chart />
        </div>
        <VerticalScroll />
      </div>
      <SheetTabs />
      <StatusBar />
    </main>
  );
}

/* ---------- editor behind the window ---------- */

function EditorPage() {
  return (
    <div className="text-[15px] leading-[21px] whitespace-nowrap text-[#222]">
      <div className="h-11 bg-[#4651b6]" />
      <div className="flex h-[49px] items-center gap-4 border-t border-[#7986cb] bg-linear-to-b from-[#263238] to-[#455a64] text-white">
        <span className="-ml-[5px] font-['Liberation_Serif',serif] text-2xl line-through">S</span>
        <span className="h-5 w-px bg-[#999]" />
      </div>
      <div className="h-[10px] bg-[#cfd8dc]" />
      <div className="flex justify-between">
        <div>
          <div className="mt-[17px] w-96 bg-[#f5f5f5] font-['Liberation_Mono',monospace]">
            <p className="-ml-2">ITLE</p>
            <p className="-ml-2">UBTIT</p>
          </div>
          <p className="mt-5 pl-1">umo</p>
          <p>opisu</p>
          <h2 className="mt-[13px] text-3xl leading-[40px] text-[#5c5a90]">ípr</h2>
          <p className="mt-[10px] -ml-1">ťte si</p>
          <p className="-ml-1">ctorif</p>
          <p className="-ml-1">or stá</p>
          <p>žce v</p>
          <h2 className="mt-[35px] text-3xl leading-[40px] text-[#5c5a90]">ter</h2>
          <p className="mt-[10px] pl-1">nač</p>
          <p className="text-[#49a5c4]">(/upl</p>
          <p className="text-[#6f9f58]">ovat]</p>
          <p className="pl-1">zdro</p>
          <p className="text-[#6f9f58]">Naci</p>
          <p>e na</p>
          <p className="text-[#49a5c4]">/uplo</p>
          <p className="-ml-1">může</p>
          <h2 className="mt-3 -ml-2 text-3xl leading-[40px] text-[#5c5a90]">ktu</h2>
          <p className="mt-[10px] -ml-1">tázku</p>
          <p className="-ml-1 text-[#49a5c4]">uploa</p>
          <p className="-ml-2">ktuali</p>
          <p>poru</p>
          <p className="text-[#49a5c4]">](/up</p>
          <p>sou přenačtena a grafy, kontingenční tabulky a všechny dal</p>
        </div>
        <p className="mt-[78px] w-[17px]">je</p>
      </div>
    </div>
  );
}

export default function App() {
  return (
    <div className="relative h-screen overflow-hidden bg-white font-['Open_Sans',sans-serif]">
      <EditorPage />
      <div className="absolute bottom-0 left-[412px] flex h-3 w-[156px] items-start justify-end overflow-hidden border-l border-[#999] bg-[#dadada] text-[11px] leading-[16px] text-black">
        <svg viewBox="0 0 12 14" className="mr-[7px] h-[14px] w-3" fill="#fff" stroke="#777">
          <path d="M.5.5h8l3 3v10H.5z" />
          <path d="M3 4.500h5M3 6.500h6M3 8.500h6" stroke="#2f8fd8" />
        </svg>
        <span className="w-[86px]">Documents</span>
        <span className="h-full w-[17px] border-l border-white bg-[#cdcdcd]" />
      </div>
      <div className="absolute right-[80px] bottom-0 h-3 w-px bg-[#999]" />
      <ExcelWindow />
    </div>
  );
}
